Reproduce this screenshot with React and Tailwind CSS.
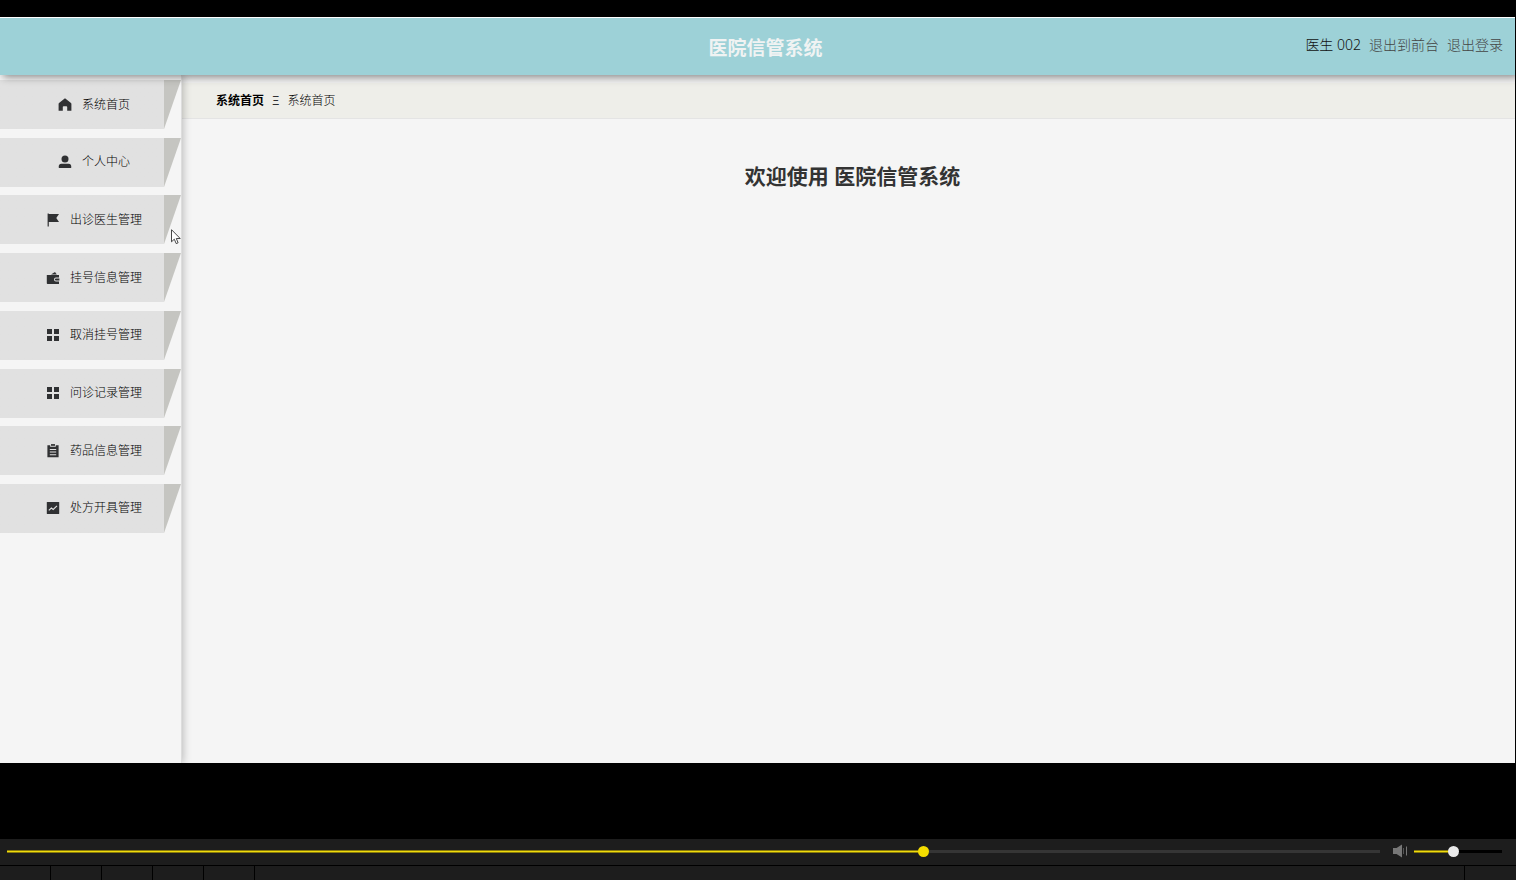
import { useState } from "react";

function HomeIcon() {
  return (
    <svg viewBox="0 0 14 14" className="size-[14px] shrink-0" fill="currentColor" aria-hidden="true">
      <path d="M7 .3 1 5Q.6 5.4.6 5.9V12.8H4.8V9A.8.8 0 0 1 5.6 8.2H8.4A.8.8 0 0 1 9.2 9V12.8H13.4V5.9Q13.4 5.4 13 5Z" />
    </svg>
  );
}

function UserIcon() {
  return (
    <svg viewBox="0 0 14 14" className="size-[14px] shrink-0" fill="currentColor" aria-hidden="true">
      <circle cx="7" cy="4" r="3.5" />
      <path d="M.8 13V11.3Q.8 8.7 3.4 8.7H10.6Q13.2 8.7 13.2 11.3V13Z" />
    </svg>
  );
}

function FlagIcon() {
  return (
    <svg viewBox="0 0 14 14" className="size-[14px] shrink-0" fill="currentColor" aria-hidden="true">
      <path d="M1.6.4H2.8V1H13L10.3 5 13 9H2.8V13.6H1.6Z" />
    </svg>
  );
}

function WalletIcon() {
  return (
    <svg viewBox="0 0 14 14" className="size-[14px] shrink-0" fill="currentColor" aria-hidden="true">
      <path d="M5 3.4 9 .9 10.8 3.4Z" />
      <path d="M.8 4H13V6.6H9.9A1.9 1.9 0 0 0 9.9 10.4H13V13H1.6Q.8 13 .8 12.2Z" />
      <path d="M10 7.4H13.4V9.6H10A1.1 1.1 0 0 1 10 7.4Z" />
    </svg>
  );
}

function GridIcon() {
  return (
    <svg viewBox="0 0 14 14" className="size-[14px] shrink-0" fill="currentColor" aria-hidden="true">
      <path d="M1 1H6V6H1ZM8 1H13V6H8ZM1 8H6V13H1ZM8 8H13V13H8Z" />
    </svg>
  );
}

function OrderIcon() {
  return (
    <svg viewBox="0 0 14 14" className="size-[14px] shrink-0" fill="currentColor" aria-hidden="true">
      <path
        fillRule="evenodd"
        d="M1.4 1.2H4.2V2.7H9.8V1.2H12.6V13.2H1.4ZM3.8 5V6H10.2V5ZM3.8 7.6V8.6H10.2V7.6ZM3.8 10.2V11.2H10.2V10.2Z"
      />
      <path d="M5 .1H9V1.8H5Z" />
    </svg>
  );
}

function MarketingIcon() {
  return (
    <svg viewBox="0 0 14 14" className="size-[14px] shrink-0" aria-hidden="true">
      <rect x=".8" y="1" width="12.4" height="12" rx=".5" fill="currentColor" />
      <path d="M2.8 9.4 5.4 7 7.2 8.5 11 4.9" fill="none" stroke="#e1e1e1" strokeWidth="1.1" />
    </svg>
  );
}

function SpeakerIcon() {
  return (
    <svg viewBox="0 0 14 14" className="size-[14px] shrink-0" aria-hidden="true">
      <path d="M0 4H3.5L9 .5V13.5L3.5 10H0Z" fill="#777" />
      <path d="M10.5 4V10" stroke="#555" />
      <path d="M13.5 2.5V11.5" stroke="#777" />
    </svg>
  );
}

const menu = [
  { label: "系统首页", icon: HomeIcon },
  { label: "个人中心", icon: UserIcon },
  { label: "出诊医生管理", icon: FlagIcon },
  { label: "挂号信息管理", icon: WalletIcon },
  { label: "取消挂号管理", icon: GridIcon },
  { label: "问诊记录管理", icon: GridIcon },
  { label: "药品信息管理", icon: OrderIcon },
  { label: "处方开具管理", icon: MarketingIcon },
];

function MenuItem({ label, icon: Icon }) {
  return (
    <li className="relative">
      <a
        href="#"
        className="flex h-[49px] items-center justify-center gap-[10px] bg-linear-to-r from-[#e1e1e1] from-[164px] to-transparent to-[164px] pl-[7px] text-xs font-light text-[#303133]"
      >
        <Icon />
        <span className="text-black">{label}</span>
      </a>
      <svg viewBox="0 0 17 49" className="absolute top-0 right-0 h-[49px] w-[17px]" aria-hidden="true">
        <path d="M0 0H17L0 49Z" fill="#c5c5c1" />
      </svg>
    </li>
  );
}

function Header() {
  return (
    <header className="relative z-10 grid h-[58px] grid-cols-[1fr_auto_1fr] items-center border-t border-white bg-[#9dd1d7] pr-3 pl-7 shadow-[3px_2px_8px_rgba(0,0,0,0.45)]">
      <h1 className="col-start-2 pt-1 text-[19px] font-bold text-[#f0f3f3]">医院信管系统</h1>
      <div className="flex items-center justify-end gap-2 pb-1 text-sm font-light text-[#444]">
        <span className="text-[#111]">医生 002</span>
        <a href="#">退出到前台</a>
        <a href="#">退出登录</a>
      </div>
    </header>
  );
}

function Slider({ label, value, onChange, fill, rest, className }) {
  return (
    <input
      type="range"
      min="0"
      max="1000"
      aria-label={label}
      value={value}
      onChange={(e) => onChange(Number(e.target.value))}
      className={`h-[3px] appearance-none ${className}`}
      style={{
        backgroundImage: `linear-gradient(to right, transparent ${value / 10}%, ${rest} ${value / 10}%), ${fill}`,
      }}
    />
  );
}

const yellow = "linear-gradient(#897b0b 0 1px, #f0dc0c 1px 2px, #897b0b 2px)";
const thumb =
  "[&::-webkit-slider-thumb]:size-[11px] [&::-webkit-slider-thumb]:appearance-none [&::-webkit-slider-thumb]:rounded-full";

function Player() {
  const [time, setTime] = useState(669);
  const [volume, setVolume] = useState(440);
  return (
    <footer className="bg-[#1d1d1d]">
      <div className="flex h-[26px] items-center pr-[14px] pb-[2px] pl-[7px]">
        <Slider
          label="播放进度"
          value={time}
          onChange={setTime}
          fill={yellow}
          rest="#353535"
          className={`mr-[13px] min-w-0 flex-1 [&::-webkit-slider-thumb]:bg-[#f4dd00] ${thumb}`}
        />
        <SpeakerIcon />
        <Slider
          label="音量"
          value={volume}
          onChange={setVolume}
          fill={yellow}
          rest="#000"
          className={`ml-[7px] w-[88px] [&::-webkit-slider-thumb]:bg-[#eaeaea] ${thumb}`}
        />
      </div>
      <div className="flex h-[15px] border-t border-black">
        {[1, 2, 3, 4, 5].map((n) => (
          <div key={n} className="w-[51px] border-r border-black" />
        ))}
        <div className="ml-auto w-[52px] border-l border-black" />
      </div>
    </footer>
  );
}

function Cursor() {
  return (
    <svg viewBox="0 0 10 16" className="pointer-events-none absolute top-[229px] left-[171px] z-20 h-4 w-[10px]" aria-hidden="true">
      <path d="M.5.7V12.8L3.3 10.2 5.2 14.6 7.1 13.8 5.3 9.5H9.2Z" fill="#fff" stroke="#333" strokeWidth=".9" />
    </svg>
  );
}

export default function App() {
  return (
    <div className="relative flex min-h-screen flex-col bg-black pt-[17px] font-['Noto_Sans','Noto_Sans_CJK_SC',sans-serif]">
      <div className="mr-px flex flex-1 flex-col overflow-hidden bg-[#f5f5f5]">
        <Header />
        <div className="flex flex-1">
          <nav className="relative w-[182px] shrink-0 border-r border-[#ddd] bg-[#f5f5f5] pt-[5px] shadow-[1px_0_8px_rgba(0,0,0,0.25)]">
            <ul className="flex h-[453px] flex-col justify-between">
              {menu.map((item) => (
                <MenuItem key={item.label} {...item} />
              ))}
            </ul>
          </nav>
          <main className="min-w-0 flex-1">
            <div className="flex h-11 items-center gap-2 border-t-8 border-b border-t-[#f1f1f1] border-b-[#e4e4e4] bg-[#eeeee9] pl-[34px] text-xs text-[#303133]">
              <b className="font-bold text-black">系统首页</b>
              <span>Ξ</span>
              <span className="font-light text-black">系统首页</span>
            </div>
            <h2 className="mt-[41px] pl-2 text-center text-[21px] leading-8 font-bold text-[#333]">
              欢迎使用 医院信管系统
            </h2>
          </main>
        </div>
      </div>
      <div className="h-[76px]" />
      <Player />
      <Cursor />
    </div>
  );
}
